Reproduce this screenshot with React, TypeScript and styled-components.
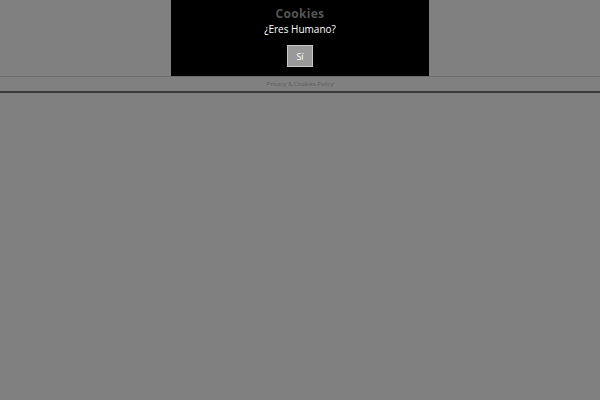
import React from "react";
import styled, { createGlobalStyle } from "styled-components";

const Global = createGlobalStyle`
  html, body { margin: 0; padding: 0; background: #808080; height: 100%; }
  body { font-family: "Open Sans", "DejaVu Sans", sans-serif; }
  #root { min-height: 100vh; background: #808080; }
`;

const Page = styled.div`
  display: flex;
  flex-direction: column;
  align-items: stretch;
`;

const Top = styled.div`
  display: flex;
  justify-content: center;
  border-bottom: 1px solid #6b6b6b;
`;

const Dialog = styled.div`
  width: 258px;
  height: 76px;
  background: #000;
  display: flex;
  flex-direction: column;
  align-items: center;
  box-sizing: border-box;
  padding-top: 6px;
`;

const Title = styled.div`
  color: #555;
  font-size: 12px;
  font-weight: 700;
  line-height: 16px;
  letter-spacing: 0.3px;
`;

const Question = styled.div`
  color: #fff;
  font-size: 10px;
  line-height: 14px;
  margin-top: 0px;
`;

const Button = styled.button`
  margin-top: 9px;
  width: 26px;
  height: 22px;
  background: #999;
  border: 1px solid #c8c8c8;
  color: #fff;
  font-family: inherit;
  font-size: 9px;
  padding: 0;
  display: flex;
  align-items: center;
  justify-content: center;
`;

const Footer = styled.div`
  height: 14px;
  display: flex;
  align-items: center;
  justify-content: center;
  border-bottom: 2px solid #3a3a3a;
`;

const FooterLink = styled.span`
  color: #5e5e5e;
  font-size: 6px;
  line-height: 8px;
`;

export default function App() {
  return (
    <>
      <Global />
      <Page>
        <Top>
          <Dialog>
            <Title>Cookies</Title>
            <Question>¿Eres Humano?</Question>
            <Button>Sí</Button>
          </Dialog>
        </Top>
        <Footer>
          <FooterLink>Privacy &amp; Cookies Policy</FooterLink>
        </Footer>
      </Page>
    </>
  );
}
